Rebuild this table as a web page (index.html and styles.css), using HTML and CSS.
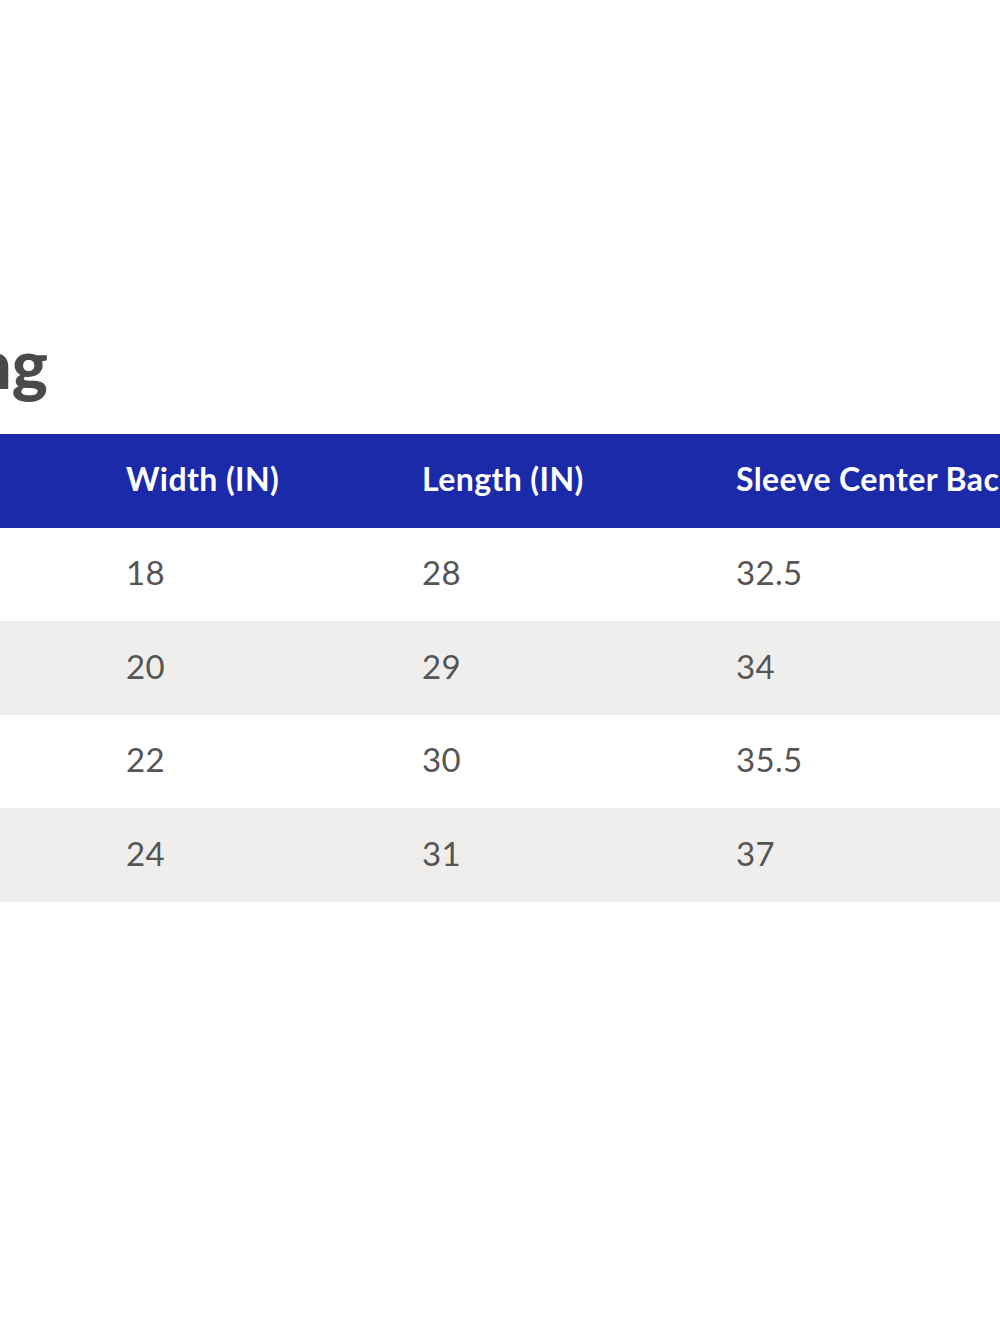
FILE: index.html
```html
<!DOCTYPE html>
<html lang="en">
<head>
<meta charset="UTF-8">
<meta name="viewport" content="width=device-width, initial-scale=1.0">
<title>Size Chart</title>
<link rel="stylesheet" href="styles.css">
</head>
<body>

<div class="page">
    <h2 class="chart-title">Sizing</h2>

    <div class="chart">
        <div class="chart-row chart-head">
            <div class="cell">Size</div>
            <div class="cell">Width (IN)</div>
            <div class="cell">Length (IN)</div>
            <div class="cell">Sleeve Center Back (IN)</div>
        </div>
        <div class="chart-row">
            <div class="cell">S</div>
            <div class="cell">18</div>
            <div class="cell">28</div>
            <div class="cell">32.5</div>
        </div>
        <div class="chart-row">
            <div class="cell">M</div>
            <div class="cell">20</div>
            <div class="cell">29</div>
            <div class="cell">34</div>
        </div>
        <div class="chart-row">
            <div class="cell">L</div>
            <div class="cell">22</div>
            <div class="cell">30</div>
            <div class="cell">35.5</div>
        </div>
        <div class="chart-row">
            <div class="cell">XL</div>
            <div class="cell">24</div>
            <div class="cell">31</div>
            <div class="cell">37</div>
        </div>
    </div>
</div>

</body>
</html>
```

FILE: styles.css
```css
body {
    margin: 0;
    padding: 0;
    background: #fff;
    overflow: hidden;
    font-family: Lato, "Open Sans", Arial, sans-serif;
}

.page {
    padding-top: 322px;
    height: 1333px;
    box-sizing: border-box;
    overflow: hidden;
}

.chart-title {
    width: 348px;
    margin: 0 0 30px -300px;
    text-align: right;
    font-size: 68px;
    line-height: 82px;
    font-weight: 900;
    color: #4a4a4a;
    white-space: nowrap;
}

.chart {
    margin-left: -300px;
    width: 1400px;
}

.chart-row {
    display: grid;
    grid-template-columns: 426px 296px 314px 1fr;
    align-items: center;
    height: 93.5px;
    box-sizing: border-box;
    padding-bottom: 4px;
    font-size: 33px;
    letter-spacing: 0.3px;
    color: #555;
}

.chart-row:nth-child(odd) {
    background: #f0eeed;
}

.chart-head {
    background: #1a2aa8 !important;
    color: #fff;
    font-size: 32px;
    letter-spacing: 0.4px;
    font-weight: 700;
}

.cell {
    white-space: nowrap;
}
```
